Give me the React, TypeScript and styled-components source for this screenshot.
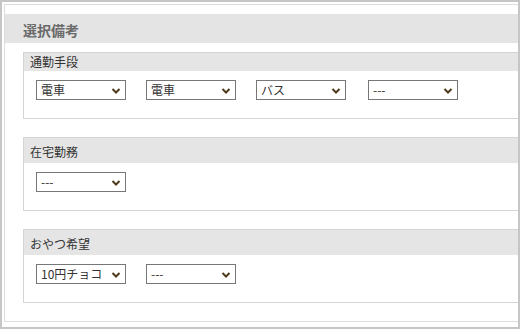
import styled, { createGlobalStyle } from "styled-components";

const GlobalStyle = createGlobalStyle`
  html, body {
    margin: 0;
    padding: 0;
    background: #fff;
  }
  body {
    font-family: "Noto Sans CJK JP", "Noto Sans", sans-serif;
  }
`;

const Frame = styled.div`
  box-sizing: border-box;
  width: 520px;
  height: 329px;
  border: 2px solid #c6c6c6;
  padding: 2px 0 0 2px;
  overflow: hidden;
  background: #fff;
`;

const Panel = styled.div`
  width: 580px;
  border: 1px solid #dddddd;
  padding: 9px 0 18px;
  background: #fff;
`;

const PanelHeader = styled.div`
  height: 29px;
  background: #e4e4e4;
  padding: 2px 0 0 18px;
  display: flex;
  align-items: center;
  box-sizing: border-box;
`;

const Title = styled.h2`
  margin: 0;
  font-size: 14px;
  font-weight: bold;
  color: #6a6a6a;
  line-height: 18px;
`;

const Sections = styled.div`
  display: flex;
  flex-direction: column;
  gap: 18px;
  padding: 9px 0 0 18px;
`;

const Section = styled.section`
  border: 1px solid #d2d5d8;
  background: #fff;
`;

const SectionHeader = styled.div<{ $compact?: boolean }>`
  background: #e5e5e5;
  padding: ${(p) => (p.$compact ? "1px 6px 1px" : "6px 6px 3px")};
  font-size: 12px;
  line-height: 16px;
  color: #333;
`;

const SelectRow = styled.div`
  display: flex;
  align-items: flex-start;
  gap: 20px;
  padding: 9px 12px 18px;
`;

const SelectWrap = styled.div<{ $extra?: number }>`
  position: relative;
  flex: none;
  width: 90px;
  height: 20px;
  margin-left: ${(p) => p.$extra ?? 0}px;
`;

const Select = styled.select`
  appearance: none;
  -webkit-appearance: none;
  display: block;
  box-sizing: border-box;
  width: 100%;
  height: 20px;
  margin: 0;
  border: 1px solid #777;
  border-radius: 0;
  background: #fff;
  padding: 0 18px 0 4px;
  font-family: "Noto Sans CJK JP", "Noto Sans", sans-serif;
  font-size: 12px;
  line-height: 18px;
  color: #333;
  outline: none;
`;

const Chevron = styled.svg`
  position: absolute;
  right: 5px;
  top: 7px;
  width: 10px;
  height: 7px;
  pointer-events: none;
`;

function Dropdown({ value, options, extra }: { value: string; options: string[]; extra?: number }) {
  return (
    <SelectWrap $extra={extra}>
      <Select defaultValue={value}>
        {options.map((o) => (
          <option key={o}>{o}</option>
        ))}
      </Select>
      <Chevron viewBox="0 0 10 7">
        <path d="M1.5 2 L5 5.5 L8.5 2" fill="none" stroke="#4f3b1c" strokeWidth="2" />
      </Chevron>
    </SelectWrap>
  );
}

const commute = ["---", "電車", "バス", "徒歩", "自転車"];

export default function App() {
  return (
    <>
      <GlobalStyle />
      <Frame>
        <Panel>
          <PanelHeader>
            <Title>選択備考</Title>
          </PanelHeader>
          <Sections>
            <Section>
              <SectionHeader $compact>通勤手段</SectionHeader>
              <SelectRow>
                <Dropdown value="電車" options={commute} />
                <Dropdown value="電車" options={commute} />
                <Dropdown value="バス" options={commute} />
                <Dropdown value="---" options={commute} extra={2} />
              </SelectRow>
            </Section>
            <Section>
              <SectionHeader>在宅勤務</SectionHeader>
              <SelectRow>
                <Dropdown value="---" options={["---", "可", "不可"]} />
              </SelectRow>
            </Section>
            <Section>
              <SectionHeader>おやつ希望</SectionHeader>
              <SelectRow>
                <Dropdown value="10円チョコ" options={["---", "10円チョコ", "せんべい"]} />
                <Dropdown value="---" options={["---", "10円チョコ", "せんべい"]} />
              </SelectRow>
            </Section>
          </Sections>
        </Panel>
      </Frame>
    </>
  );
}
